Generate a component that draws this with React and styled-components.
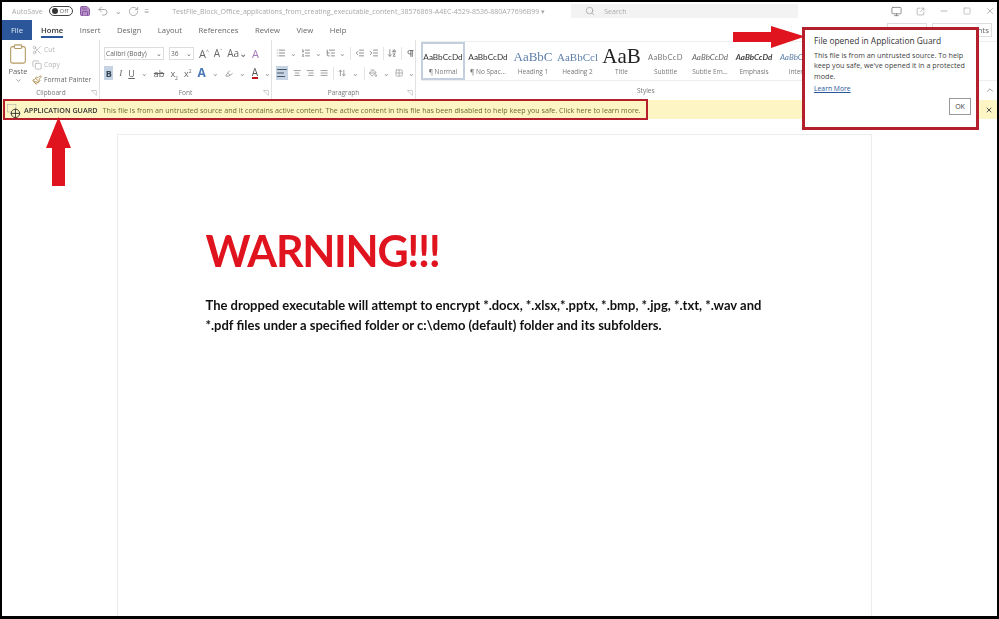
import React from 'react';
import styled, { createGlobalStyle } from 'styled-components';
import {
  Save, Undo2, RotateCw, Search, Minus, X, Square, Scissors, Copy, Paintbrush,
  Clipboard, List, ListOrdered, ListTree, IndentDecrease, IndentIncrease, ArrowDownAZ,
  Pilcrow, AlignLeft, AlignCenter, AlignRight, AlignJustify, ArrowUpDown, PaintBucket,
  Grid2x2, ChevronUp, ChevronDown, Highlighter, Monitor, SquareArrowOutUpRight,
} from 'lucide-react';

const GlobalStyle = createGlobalStyle`
  html, body { margin: 0; padding: 0; background: #000; }
  * { box-sizing: border-box; }
`;

const tabs = ['Home', 'Insert', 'Design', 'Layout', 'References', 'Review', 'View', 'Help'];

const styles = [
  { sample: 'AaBbCcDd', label: '¶ Normal', active: true, size: 8.2, color: '#333', width: 44 },
  { sample: 'AaBbCcDd', label: '¶ No Spac...', size: 8.2, color: '#333', width: 46 },
  { sample: 'AaBbC', label: 'Heading 1', size: 13, color: '#5d7fa8', font: 'Liberation Serif', width: 44 },
  { sample: 'AaBbCcl', label: 'Heading 2', size: 11, color: '#5d7fa8', font: 'Liberation Serif', width: 45 },
  { sample: 'AaB', label: 'Title', size: 21, color: '#222', font: 'Liberation Serif', width: 43 },
  { sample: 'AaBbCcD', label: 'Subtitle', size: 7.6, color: '#777', spacing: 0.4, width: 45 },
  { sample: 'AaBbCcDd', label: 'Subtle Em...', size: 8, color: '#666', italic: true, width: 44 },
  { sample: 'AaBbCcDd', label: 'Emphasis', size: 8, color: '#444', italic: true, bold: true, width: 44 },
  { sample: 'AaBbCcDd', label: 'Intens', size: 8, color: '#5d7fa8', italic: true, width: 44 },
];

export default function App() {
  return (
    <>
      <GlobalStyle />
      <Frame>
        <Window>
          <TitleBar>
            <AutoSave>AutoSave</AutoSave>
            <Toggle><Knob />Off</Toggle>
            <Save size={12} color="#8d5aa8" fill="#b48fc4" />
            <Undo2 size={12} color="#aaa" />
            <Dim>⌄</Dim>
            <RotateCw size={11} color="#aaa" />
            <Dim>≡</Dim>
            <DocTitle>TestFile_Block_Office_applications_from_creating_executable_content_38576869-A4EC-4529-8536-880A77696B99 ▾</DocTitle>
            <SearchBox><Search size={10} color="#aaa" />Search</SearchBox>
            <WindowButtons>
              <Monitor size={11} color="#888" />
              <SquareArrowOutUpRight size={9} color="#aaa" />
              <Minus size={10} color="#aaa" />
              <Square size={8} color="#aaa" />
              <X size={10} color="#aaa" />
            </WindowButtons>
          </TitleBar>

          <TabRow>
            <FileTab>File</FileTab>
            {tabs.map((tab) => (
              <Tab key={tab} $active={tab === 'Home'}>{tab}</Tab>
            ))}
            <TabSpacer />
            <TabButton $width={40} />
            <TabButton $width={60}>Comments</TabButton>
          </TabRow>

          <Ribbon>
            <Group $width={97}>
              <GroupBody $row>
                <PasteColumn>
                  <Clipboard size={22} color="#b59a62" strokeWidth={1.2} />
                  <span>Paste</span>
                  <ChevronDown size={7} color="#666" />
                </PasteColumn>
                <ClipboardList>
                  <ClipItem $faded><Scissors size={10} />Cut</ClipItem>
                  <ClipItem $faded><Copy size={10} />Copy</ClipItem>
                  <ClipItem><Paintbrush size={10} color="#a8853c" />Format Painter</ClipItem>
                </ClipboardList>
              </GroupBody>
              <GroupLabel>Clipboard<Launcher>◹</Launcher></GroupLabel>
            </Group>

            <Group $width={172}>
              <GroupBody>
                <ToolRow $gap={5}>
                  <Select $width={60}>Calibri (Body)<span>⌄</span></Select>
                  <Select $width={25}>36<span>⌄</span></Select>
                  <Glyph $size={11}>A<sup>^</sup></Glyph>
                  <Glyph $size={10}>A<sup>ˇ</sup></Glyph>
                  <Glyph $size={10}>Aa⌄</Glyph>
                  <Glyph $size={11} $color="#a678b8">A</Glyph>
                </ToolRow>
                <ToolRow $gap={6}>
                  <Pressed><b>B</b></Pressed>
                  <Glyph $serif><i>I</i></Glyph>
                  <Glyph><u>U</u></Glyph>
                  <Dim>⌄</Dim>
                  <Glyph><s>ab</s></Glyph>
                  <Glyph>x<sub>2</sub></Glyph>
                  <Glyph>x<sup>2</sup></Glyph>
                  <Glyph $size={12} $color="#4a78b8"><b>A</b></Glyph>
                  <Dim>⌄</Dim>
                  <Highlighter size={11} color="#777" />
                  <Dim>⌄</Dim>
                  <ColorA>A</ColorA>
                  <Dim>⌄</Dim>
                </ToolRow>
              </GroupBody>
              <GroupLabel>Font<Launcher>◹</Launcher></GroupLabel>
            </Group>

            <Group $width={144}>
              <GroupBody>
                <ToolRow $gap={4}>
                  <List size={12} color="#777" /><Dim>⌄</Dim>
                  <ListOrdered size={12} color="#777" /><Dim>⌄</Dim>
                  <ListTree size={12} color="#777" /><Dim>⌄</Dim>
                  <Sep />
                  <IndentDecrease size={12} color="#777" />
                  <IndentIncrease size={12} color="#777" />
                  <Sep />
                  <ArrowDownAZ size={12} color="#777" />
                  <Sep />
                  <Pilcrow size={11} color="#555" />
                </ToolRow>
                <ToolRow $gap={5}>
                  <PressedIcon><AlignLeft size={12} color="#456" /></PressedIcon>
                  <AlignCenter size={12} color="#777" />
                  <AlignRight size={12} color="#777" />
                  <AlignJustify size={12} color="#777" />
                  <Sep />
                  <ArrowUpDown size={12} color="#777" /><Dim>⌄</Dim>
                  <Sep />
                  <PaintBucket size={12} color="#888" /><Dim>⌄</Dim>
                  <Grid2x2 size={12} color="#999" /><Dim>⌄</Dim>
                </ToolRow>
              </GroupBody>
              <GroupLabel>Paragraph<Launcher>◹</Launcher></GroupLabel>
            </Group>

            <StylesGroup>
              <Gallery>
                {styles.map((item) => (
                  <StyleCard key={item.label} $active={item.active} $width={item.width}>
                    <StyleSample
                      $size={item.size}
                      $color={item.color}
                      $font={item.font}
                      $italic={item.italic}
                      $bold={item.bold}
                      $spacing={item.spacing}
                    >
                      {item.sample}
                    </StyleSample>
                    <StyleLabel>{item.label}</StyleLabel>
                  </StyleCard>
                ))}
              </Gallery>
              <StylesLabel>Styles</StylesLabel>
            </StylesGroup>
            <Collapse><ChevronUp size={10} color="#888" /></Collapse>
          </Ribbon>

          <GuardBar>
            <GuardIcon viewBox="0 0 16 16" width="15" height="15">
              <rect x="0.5" y="0.5" width="9" height="8" fill="none" stroke="#aaa" strokeWidth="0.6" />
              <circle cx="9" cy="10" r="4.5" fill="#fdf6c4" stroke="#333" strokeWidth="1" />
              <path d="M9 5v10M4 10h10" stroke="#333" strokeWidth="1" />
            </GuardIcon>
            <GuardTitle>APPLICATION GUARD</GuardTitle>
            <GuardText>
              This file is from an untrusted source and it contains active content. The active content in this file has been disabled to help keep you safe. Click here to learn more.
            </GuardText>
            <GuardClose><X size={8} color="#555" strokeWidth={3} /></GuardClose>
          </GuardBar>

          <DocArea>
            <Page>
              <Warning>WARNING!!!</Warning>
              <Body>
                The dropped executable will attempt to encrypt *.docx, *.xlsx,*.pptx, *.bmp, *.jpg, *.txt, *.wav and *.pdf files under a specified folder or c:\demo (default) folder and its subfolders.
              </Body>
            </Page>
          </DocArea>
        </Window>

        <BarHighlight />

        <UpArrow viewBox="0 0 25 69" width="25" height="69">
          <path d="M12.5 0L25 31H19V69H6V31H0Z" fill="#e0141e" />
        </UpArrow>
        <RightArrow viewBox="0 0 72 22" width="72" height="22">
          <path d="M0 6H38V0L72 10.5L38 22V16H0Z" fill="#e0141e" />
        </RightArrow>

        <Popup>
          <PopupTitle>File opened in Application Guard</PopupTitle>
          <PopupText>This file is from an untrusted source. To help keep you safe, we've opened it in a protected mode.</PopupText>
          <PopupLink>Learn More</PopupLink>
          <PopupFooter><OkButton>OK</OkButton></PopupFooter>
        </Popup>
      </Frame>
    </>
  );
}

const Frame = styled.div`
  position: relative;
  width: 999px;
  height: 619px;
  padding: 2px 2px 3px 2px;
  background: #000;
  overflow: hidden;
  font-family: "Open Sans", "Liberation Sans", sans-serif;
`;

const Window = styled.div`
  display: flex;
  flex-direction: column;
  height: 100%;
  background: #fff;
  overflow: hidden;
  filter: blur(0.35px);
`;

const TitleBar = styled.div`
  display: flex;
  align-items: center;
  gap: 6px;
  height: 18px;
  padding-left: 10px;
  flex-shrink: 0;
  color: #aaa;
  font-size: 7px;
  white-space: nowrap;
`;

const AutoSave = styled.span`
  color: #aaa;
`;

const Toggle = styled.span`
  display: flex;
  align-items: center;
  gap: 2px;
  width: 24px;
  height: 10px;
  padding-left: 2px;
  border: 1px solid #444;
  border-radius: 6px;
  color: #666;
  font-size: 6px;
`;

const Knob = styled.i`
  width: 6px;
  height: 6px;
  border-radius: 50%;
  background: #333;
`;

const Dim = styled.span`
  color: #999;
  font-size: 8px;
  line-height: 1;
`;

const DocTitle = styled.span`
  margin-left: 17px;
  width: 386px;
  overflow: hidden;
  color: #a8a8a8;
  font-size: 7px;
`;

const SearchBox = styled.div`
  display: flex;
  align-items: center;
  gap: 9px;
  width: 227px;
  height: 14px;
  margin-left: 7px;
  padding-left: 14px;
  background: #f3f3f3;
  color: #aaa;
  font-size: 7px;
`;

const WindowButtons = styled.div`
  display: flex;
  align-items: center;
  gap: 14px;
  margin-left: 87px;
`;

const TabRow = styled.div`
  display: flex;
  align-items: center;
  height: 20px;
  flex-shrink: 0;
  font-size: 7.7px;
`;

const FileTab = styled.div`
  display: flex;
  align-items: center;
  justify-content: center;
  width: 30px;
  height: 20px;
  background: #2b579a;
  color: #dfe8f5;
`;

const Tab = styled.div`
  margin-left: ${(p) => (p.$active ? '9px' : '0')};
  margin-right: 16.5px;
  padding: 2px 0 1px;
  border-bottom: 2px solid ${(p) => (p.$active ? '#2b579a' : 'transparent')};
  color: ${(p) => (p.$active ? '#333' : '#666')};
  font-weight: ${(p) => (p.$active ? 600 : 400)};
`;

const TabSpacer = styled.div`
  flex: 1;
`;

const TabButton = styled.div`
  width: ${(p) => p.$width}px;
  height: 14px;
  margin-right: 5px;
  border: 1px solid #ddd;
  color: #666;
  font-size: 8px;
  text-align: right;
  padding-right: 2px;
`;

const Ribbon = styled.div`
  position: relative;
  display: flex;
  height: 60px;
  flex-shrink: 0;
  padding-left: 1px;
  background: #fff;
`;

const Group = styled.div`
  display: flex;
  flex-direction: column;
  width: ${(p) => p.$width}px;
  border-right: 1px solid #e2e2e2;
  flex-shrink: 0;
`;

const GroupBody = styled.div`
  flex: 1;
  display: flex;
  flex-direction: ${(p) => (p.$row ? 'row' : 'column')};
  gap: ${(p) => (p.$row ? '5px' : '2px')};
  padding: ${(p) => (p.$row ? '3px 0 0 4px' : '4px 0 0 4px')};
`;

const GroupLabel = styled.div`
  position: relative;
  height: 14px;
  color: #777;
  font-size: 6.5px;
  line-height: 13px;
  text-align: center;
`;

const Launcher = styled.span`
  position: absolute;
  right: 3px;
  top: 0;
  color: #999;
  font-size: 7px;
`;

const PasteColumn = styled.div`
  display: flex;
  flex-direction: column;
  align-items: center;
  gap: 1px;
  color: #666;
  font-size: 7.5px;
`;

const ClipboardList = styled.div`
  display: flex;
  flex-direction: column;
  gap: 4px;
  padding-top: 1px;
`;

const ClipItem = styled.div`
  display: flex;
  align-items: center;
  gap: 2px;
  height: 11px;
  margin-left: -2px;
  color: ${(p) => (p.$faded ? '#b5b5b5' : '#666')};
  font-size: 6.8px;
  white-space: nowrap;
`;

const ToolRow = styled.div`
  display: flex;
  align-items: center;
  gap: ${(p) => p.$gap || 4}px;
  height: 18px;
`;

const Select = styled.div`
  display: flex;
  align-items: center;
  justify-content: space-between;
  width: ${(p) => p.$width}px;
  height: 13px;
  padding: 0 1px;
  border: 1px solid #ddd;
  color: #666;
  font-size: 6.6px;
  white-space: nowrap;
`;

const Glyph = styled.span`
  color: ${(p) => p.$color || '#666'};
  font-family: ${(p) => (p.$serif ? '"Liberation Serif", serif' : 'inherit')};
  font-size: ${(p) => p.$size || 9}px;
  line-height: 1;
  white-space: nowrap;
  sup, sub { font-size: 5px; line-height: 0; }
`;

const Pressed = styled.span`
  display: flex;
  align-items: center;
  justify-content: center;
  width: 13px;
  height: 14px;
  background: #c5d3e3;
  color: #345;
  font-size: 9px;
`;

const PressedIcon = styled.span`
  display: flex;
  align-items: center;
  justify-content: center;
  width: 13px;
  height: 14px;
  background: #c5d3e3;
`;

const ColorA = styled.span`
  border-bottom: 2px solid #c0141e;
  color: #555;
  font-size: 10px;
  line-height: 10px;
`;

const Sep = styled.span`
  width: 1px;
  height: 13px;
  background: #e5e5e5;
`;

const StylesGroup = styled.div`
  display: flex;
  flex-direction: column;
  flex: 1;
  padding-left: 5px;
`;

const Gallery = styled.div`
  display: flex;
  align-items: stretch;
  height: 40px;
  margin-top: 1px;
  border-top: 1px solid #eee;
  border-bottom: 1px solid #eee;
`;

const StyleCard = styled.div`
  display: flex;
  flex-direction: column;
  align-items: center;
  justify-content: space-between;
  width: ${(p) => p.$width}px;
  padding: 3px 0 2px;
  border: 2px solid ${(p) => (p.$active ? '#c3cfdc' : 'transparent')};
  flex-shrink: 0;
  overflow: hidden;
`;

const StyleSample = styled.div`
  display: flex;
  align-items: center;
  height: 19px;
  color: ${(p) => p.$color};
  font-family: ${(p) => (p.$font ? `"${p.$font}", serif` : '"Lato", sans-serif')};
  font-size: ${(p) => p.$size}px;
  font-style: ${(p) => (p.$italic ? 'italic' : 'normal')};
  font-weight: ${(p) => (p.$bold ? 700 : 400)};
  letter-spacing: ${(p) => p.$spacing || 0}px;
  white-space: nowrap;
`;

const StyleLabel = styled.div`
  color: #777;
  font-size: 6.5px;
  white-space: nowrap;
`;

const StylesLabel = styled.div`
  margin-top: 5px;
  padding-left: 216px;
  color: #777;
  font-size: 6.5px;
`;

const Collapse = styled.span`
  position: absolute;
  right: 2px;
  bottom: 0;
`;

const GuardBar = styled.div`
  display: flex;
  align-items: center;
  height: 19px;
  flex-shrink: 0;
  padding-left: 5px;
  padding-right: 4px;
  background: #fdf6c4;
  white-space: nowrap;
`;

const GuardIcon = styled.svg`
  flex-shrink: 0;
  margin-top: 3px;
`;

const GuardTitle = styled.span`
  margin-left: 2px;
  color: #333;
  font-size: 7.2px;
  font-weight: 600;
`;

const GuardText = styled.span`
  margin-left: 5px;
  color: #6b6b2e;
  font-size: 7.15px;
`;

const GuardClose = styled.span`
  display: flex;
  margin-left: auto;
`;

const DocArea = styled.div`
  flex: 1;
  display: flex;
  justify-content: center;
  padding-top: 15px;
  padding-right: 11px;
  background: #fff;
  overflow: hidden;
`;

const Page = styled.div`
  width: 755px;
  height: 600px;
  padding: 88px 88px 0;
  border: 1px solid #ececec;
  background: #fff;
`;

const Warning = styled.div`
  color: #e0141e;
  font-family: "Lato", sans-serif;
  font-size: 43px;
  font-weight: 700;
  letter-spacing: -1.3px;
  line-height: 56px;
`;

const Body = styled.p`
  margin: 16px 0 0;
  color: #111;
  font-family: "Lato", sans-serif;
  font-size: 13px;
  font-weight: 700;
  line-height: 20px;
`;

const BarHighlight = styled.div`
  position: absolute;
  left: 3px;
  top: 99px;
  width: 645px;
  height: 21px;
  border: 2px solid #b3202c;
`;

const UpArrow = styled.svg`
  position: absolute;
  left: 46px;
  top: 117px;
`;

const RightArrow = styled.svg`
  position: absolute;
  left: 733px;
  top: 26px;
`;

const Popup = styled.div`
  position: absolute;
  left: 802px;
  top: 27px;
  width: 177px;
  height: 103px;
  padding: 5px 5px 5px 9px;
  border: 3px solid #b3202c;
  background: #fff;
`;

const PopupTitle = styled.div`
  color: #333;
  font-size: 8.4px;
  line-height: 12px;
`;

const PopupText = styled.div`
  margin-top: 3px;
  color: #444;
  font-size: 7.2px;
  line-height: 10.3px;
`;

const PopupLink = styled.div`
  margin-top: 3px;
  color: #2b579a;
  font-size: 6.8px;
  text-decoration: underline;
`;

const PopupFooter = styled.div`
  display: flex;
  justify-content: flex-end;
  margin-top: 5px;
`;

const OkButton = styled.button`
  width: 22px;
  height: 17px;
  padding: 0;
  border: 1px solid #999;
  background: #fff;
  color: #444;
  font-family: inherit;
  font-size: 7px;
`;
